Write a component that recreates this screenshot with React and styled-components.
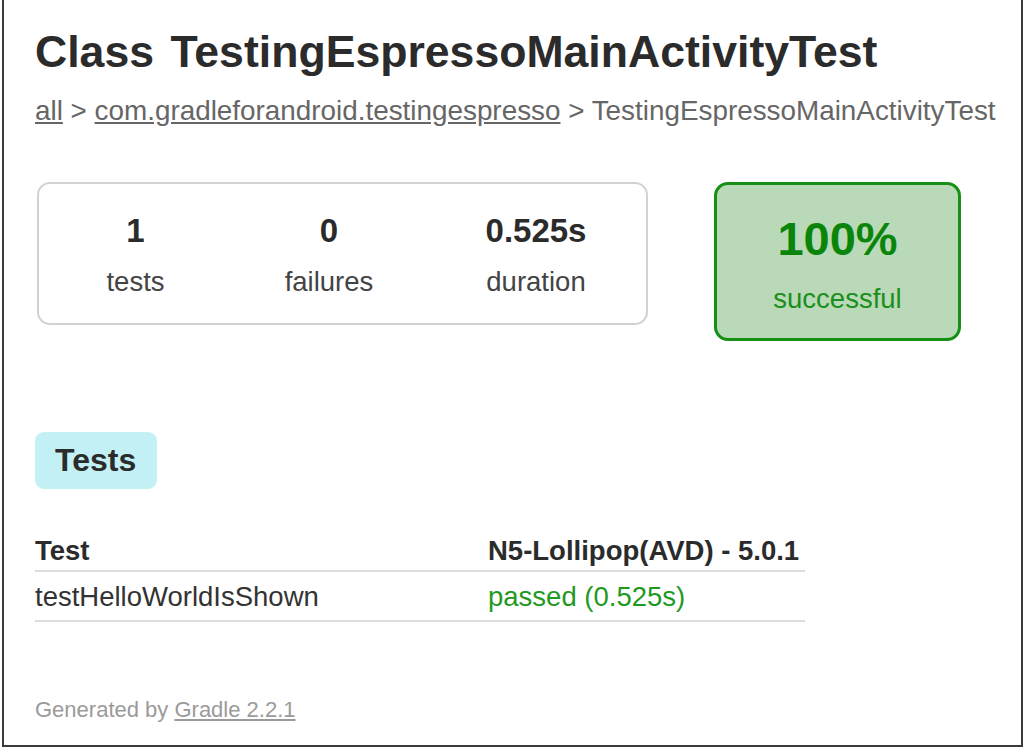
import styled, { createGlobalStyle } from 'styled-components'

const GlobalStyle = createGlobalStyle`
  html, body {
    margin: 0;
    padding: 0;
    background: #fff;
  }
  body {
    font-family: "Liberation Sans", Arial, sans-serif;
    color: #333;
  }
`

const Frame = styled.div`
  box-sizing: border-box;
  margin-left: 2px;
  width: 1021px;
  height: 747px;
  border-left: 2px solid #3a3a3a;
  border-right: 2px solid #3a3a3a;
  border-bottom: 2px solid #3a3a3a;
  padding: 26px 0 0 31px;
  overflow: hidden;
`

const Title = styled.h1`
  margin: 0;
  font-size: 44.6px;
  line-height: 52px;
  font-weight: bold;
  word-spacing: 4px;
  color: #2b2b2b;
  white-space: nowrap;
`

const Breadcrumbs = styled.div`
  margin-top: 17px;
  font-size: 27.85px;
  line-height: 32px;
  color: #666;
  white-space: nowrap;
`

const Crumb = styled.a`
  color: #666;
  text-decoration: underline;
`

const SummaryRow = styled.div`
  display: flex;
  align-items: flex-start;
  gap: 66px;
  margin-top: 55px;
  margin-left: 2px;
`

const SummaryBox = styled.div`
  box-sizing: border-box;
  width: 611px;
  height: 143px;
  border: 2px solid #d2d2d2;
  border-radius: 13px;
  display: grid;
  grid-template-columns: 193px 194px 1fr;
  align-content: start;
  padding-top: 28px;
`

const Counter = styled.div`
  text-align: center;
`

const Value = styled.div`
  font-size: ${p => p.$size || 33}px;
  line-height: ${p => p.$line || 38}px;
  font-weight: bold;
  color: ${p => p.$color || '#2b2b2b'};
`

const Label = styled.div`
  margin-top: ${p => p.$gap || 16}px;
  font-size: 27.5px;
  line-height: 32px;
  color: ${p => p.$color || '#444'};
`

const SuccessBox = styled.div`
  box-sizing: border-box;
  width: 247px;
  height: 159px;
  border: 3px solid #159015;
  border-radius: 14px;
  background: #b9d9b9;
  padding-top: 27px;
  text-align: center;
`

const TabHeader = styled.div`
  display: inline-block;
  margin-top: 91px;
  padding: 9px 21px 10px 20px;
  background: #c3f0f5;
  border-radius: 9px;
  font-size: 32px;
  line-height: 38px;
  font-weight: bold;
  color: #2b2b2b;
`

const Table = styled.table`
  display: table;
  margin-top: 42px;
  width: 770px;
  border-collapse: collapse;
  font-size: 27.5px;
  line-height: 32px;
`

const Th = styled.th`
  text-align: left;
  font-weight: bold;
  color: #2b2b2b;
  padding: 4px 0 3px;
  border-bottom: 2px solid #dcdcdc;
  width: ${p => p.$width || 'auto'};
`

const Td = styled.td`
  text-align: left;
  padding: 9px 0 7px;
  color: ${p => p.$color || '#333'};
  border-bottom: 2px solid #dcdcdc;
`

const Footer = styled.div`
  margin-top: 75px;
  font-size: 22px;
  line-height: 26px;
  color: #9a9a9a;
`

const FooterLink = styled.a`
  color: #9a9a9a;
  text-decoration: underline;
`

export default function App() {
  return (
    <>
      <GlobalStyle />
      <Frame>
        <Title>Class TestingEspressoMainActivityTest</Title>
        <Breadcrumbs>
          <Crumb>all</Crumb> &gt; <Crumb>com.gradleforandroid.testingespresso</Crumb> &gt; TestingEspressoMainActivityTest
        </Breadcrumbs>

        <SummaryRow>
          <SummaryBox>
            <Counter>
              <Value>1</Value>
              <Label>tests</Label>
            </Counter>
            <Counter>
              <Value>0</Value>
              <Label>failures</Label>
            </Counter>
            <Counter>
              <Value>0.525s</Value>
              <Label>duration</Label>
            </Counter>
          </SummaryBox>
          <SuccessBox>
            <Value $size={47} $line={54} $color="#0a850a">100%</Value>
            <Label $gap={17} $color="#1a8f1a">successful</Label>
          </SuccessBox>
        </SummaryRow>

        <TabHeader>Tests</TabHeader>

        <Table>
          <thead>
            <tr>
              <Th $width="453px">Test</Th>
              <Th>N5-Lollipop(AVD) - 5.0.1</Th>
            </tr>
          </thead>
          <tbody>
            <tr>
              <Td>testHelloWorldIsShown</Td>
              <Td $color="#1f9a1f">passed (0.525s)</Td>
            </tr>
          </tbody>
        </Table>

        <Footer>
          Generated by <FooterLink>Gradle 2.2.1</FooterLink>
        </Footer>
      </Frame>
    </>
  )
}
